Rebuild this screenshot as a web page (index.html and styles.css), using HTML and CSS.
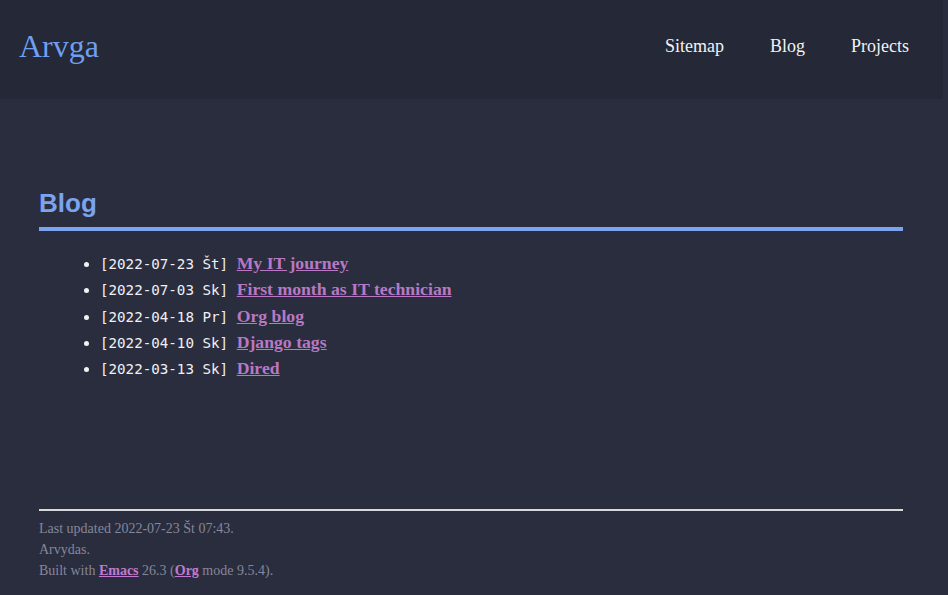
FILE: index.html
```html
<!DOCTYPE html>
<html lang="lt">
<head>
<meta charset="utf-8">
<title>Blog</title>
<link rel="stylesheet" href="styles.css">
</head>
<body>
<div class="page">
  <header class="site-header">
    <a class="logo" href="#">Arvga</a>
    <nav class="nav">
      <a href="#">Sitemap</a>
      <a href="#">Blog</a>
      <a href="#">Projects</a>
    </nav>
  </header>
  <main class="content">
    <h2 class="title">Blog</h2>
    <ul class="posts">
      <li><span class="date">[2022-07-23 Št] </span><a href="#">My IT journey</a></li>
      <li><span class="date">[2022-07-03 Sk] </span><a href="#">First month as IT technician</a></li>
      <li><span class="date">[2022-04-18 Pr] </span><a href="#">Org blog</a></li>
      <li><span class="date">[2022-04-10 Sk] </span><a href="#">Django tags</a></li>
      <li><span class="date">[2022-03-13 Sk] </span><a href="#">Dired</a></li>
    </ul>
  </main>
  <footer class="site-footer">
    <p>Last updated 2022-07-23 Št 07:43.</p>
    <p>Arvydas.</p>
    <p>Built with <a href="#">Emacs</a> 26.3 (<a href="#">Org</a> mode 9.5.4).</p>
  </footer>
</div>
</body>
</html>
```
FILE: styles.css
```css
html, body {
  margin: 0;
  padding: 0;
  background: #2a2d3e;
}
body {
  font-family: "Liberation Serif", "Times New Roman", serif;
  color: #e6e6ea;
  height: 595px;
  overflow: hidden;
}
.page {
  width: 942px;
}
.site-header {
  width: 943px;
  height: 99px;
  background: #252836;
  display: flex;
  align-items: center;
  justify-content: space-between;
  padding: 0 34px 0 19px;
  box-sizing: border-box;
}
.logo {
  font-size: 32px;
  color: #6f9ff0;
  text-decoration: none;
  margin-top: -6px;
}
.nav {
  display: flex;
  gap: 46px;
  margin-top: -6px;
}
.nav a {
  font-size: 18px;
  color: #f2f2f5;
  text-decoration: none;
}
.content {
  margin: 0 39px;
  padding-top: 89px;
}
.title {
  font-family: "Liberation Sans", Arial, sans-serif;
  font-weight: bold;
  font-size: 26px;
  line-height: 30px;
  color: #7aa3f0;
  margin: 0;
  padding-bottom: 9px;
  border-bottom: 4px solid #7aa3f0;
}
.posts {
  margin: 19px 0 0;
  padding-left: 61px;
  list-style: disc;
}
.posts li {
  line-height: 26.25px;
  height: 26.25px;
  color: #f2f2f5;
}
.date {
  font-family: "DejaVu Sans Mono", monospace;
  font-size: 14.2px;
  line-height: 26.25px;
  color: #f0f0f4;
}
.posts a {
  font-size: 17.7px;
  line-height: 26.25px;
  font-weight: bold;
  color: #b978c3;
}
.site-footer {
  margin: 128px 39px 0;
  border-top: 2px solid #d8d8dc;
  padding-top: 7px;
  font-size: 14px;
  line-height: 21px;
  color: #85879a;
}
.site-footer p {
  margin: 0;
}
.site-footer a {
  font-weight: bold;
  color: #c27ad0;
}
```
